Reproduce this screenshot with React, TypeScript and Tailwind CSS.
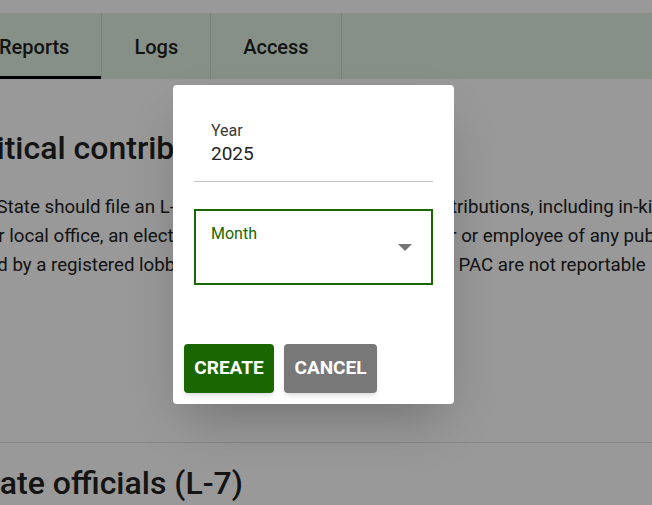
import React from "react";

export default function App() {
  return (
    <div
      className="relative w-[652px] h-[505px] overflow-hidden bg-white"
      style={{ fontFamily: "Roboto, 'Liberation Sans', sans-serif" }}
    >
      {/* Page */}
      <div className="pt-[13px]">
        <div className="flex h-[66px] bg-[#e1f0e1] text-[#1f1f1f]">
          <div className="-ml-[33px] flex">
            <div className="relative flex items-center pt-[2px] px-8 border-r border-[#cddccb] text-[20px] font-medium">
              Reports
              <div className="absolute left-0 right-0 bottom-0 h-[3px] bg-black" />
            </div>
            <div className="flex items-center pt-[2px] px-8 border-r border-[#cddccb] text-[20px] font-medium">
              Logs
            </div>
            <div className="flex items-center pt-[2px] px-8 border-r border-[#cddccb] text-[20px] font-medium">
              Access
            </div>
          </div>
        </div>

        <div className="-ml-[50px] whitespace-nowrap text-[#222]">
          <h1 className="mt-[50px] text-[32px] leading-[38px] font-medium">
            Political contributions (L-6)
          </h1>
          <div className="mt-[26px] text-[18.7px] leading-[29px]">
            <div className="-ml-[4px]">in the State should file an L-6 to report on all, the political contributions, including in-kind contributions</div>
            <div className="-ml-[9px]">state or local office, an elected official or nominee or an officer or employee of any public agency</div>
            <div className="-ml-[14px]">provided by a registered lobbyist, employer, or a lobbyist's own, PAC are not reportable</div>
          </div>
        </div>

        <div className="mt-[162px] h-px bg-[#e0e0e0]" />
        <div className="-ml-[140px] whitespace-nowrap text-[#222]">
          <h2 className="mt-[21px] text-[32px] leading-[38px] font-medium">
            Gifts to state officials (L-7)
          </h2>
        </div>
      </div>

      {/* Overlay */}
      <div className="absolute inset-0 bg-black/40" />

      {/* Dialog */}
      <div className="absolute left-[173px] top-[85px] w-[281px] h-[319px] rounded-[4px] bg-white shadow-2xl flex flex-col">
        <div className="px-[21px] pt-[36px]">
          <div className="border-b border-[#c4c4c4] pb-[16px] pl-[17px]">
            <div className="text-[16px] leading-[19px] text-[#3a3a3a]">Year</div>
            <div className="mt-[3px] text-[19px] leading-[22px] text-[#222]">2025</div>
          </div>
          <div className="mt-[27px] h-[76px] border-2 border-[#1a6600] relative pl-[15px] pt-[13px]">
            <div className="text-[16px] leading-[19px] text-[#1a6600]">Month</div>
            <svg
              className="absolute right-[19px] top-[33px]"
              width="14"
              height="8"
              viewBox="0 0 14 8"
            >
              <path d="M0 0 L14 0 L7 7 Z" fill="#757575" />
            </svg>
          </div>
        </div>
        <div className="mt-auto flex gap-[10px] pl-[11px] pb-[11px]">
          <button className="h-[49px] w-[90px] rounded-[4px] bg-[#1a6600] text-white text-[19px] font-bold uppercase shadow-md">
            Create
          </button>
          <button className="h-[49px] w-[93px] rounded-[4px] bg-[#787878] text-white text-[19px] font-bold uppercase shadow-md">
            Cancel
          </button>
        </div>
      </div>
    </div>
  );
}
